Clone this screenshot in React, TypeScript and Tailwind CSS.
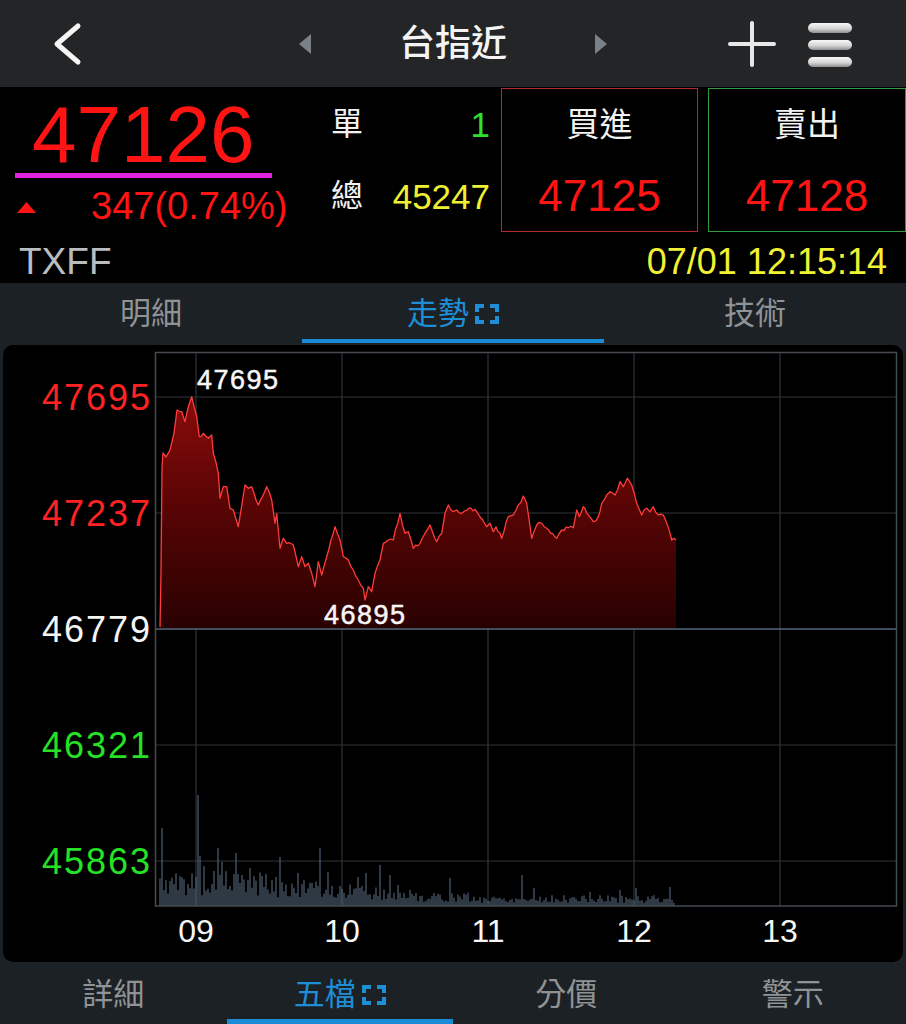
import React from "react";

const PRICE_PTS: [number, number][] = [
  [160, 627], [161, 573], [162, 467], [163, 453], [166, 457], [170, 450], [174, 433],
  [177, 410], [181.7, 411.7], [185, 421.7], [188.3, 406.7], [191.7, 396.7], [196.7, 416.7],
  [199.3, 436.7], [203.3, 433.3], [208.3, 438.3], [211.7, 435], [213.3, 453.3], [218.3, 473.3],
  [220, 498.3], [223.3, 486.7], [226.7, 486.7], [230, 508.3], [233.3, 510], [238.3, 526.7],
  [245, 485], [248.3, 488.3], [251.7, 486.7], [258.3, 505], [266.7, 486.7], [271.7, 500],
  [275, 523.3], [276.7, 513.3], [280, 548.3], [283.3, 538.3], [286.7, 543.3], [293.3, 545],
  [298.3, 566.7], [301.7, 556.7], [305, 566.7], [308.3, 563.3], [311.7, 573.3], [315, 586.7],
  [318.3, 561.7], [321.7, 575], [326.7, 556.7], [335, 526.7], [340, 540], [343.3, 556.7],
  [348.3, 560], [353.3, 570], [358.3, 580], [363.3, 588.3], [365, 600], [368.3, 586.7],
  [371.7, 591.7], [375, 573.3], [380, 560], [383.3, 543.3], [388.3, 540], [393.3, 540],
  [400, 513.3], [405, 533.3], [408.3, 531.7], [413.3, 548.3], [420, 543.3], [425, 533.3],
  [430, 525], [436.7, 541.7], [441.7, 533.3], [445, 513.3], [448.3, 505], [453.3, 511.7],
  [456.7, 510], [461.7, 513.3], [465, 510.7], [475, 509.3], [476.7, 511.7], [486.7, 526.7],
  [490, 523.3], [493.3, 531.7], [496, 526.7], [501.7, 538.3], [508.3, 516.7], [513.3, 515],
  [518.3, 505], [523.3, 496], [526.7, 503.3], [531.7, 538.3], [536.7, 525], [541.7, 523.3],
  [546.7, 528.3], [556.7, 538.3], [561.7, 530], [568.3, 527.7], [573.3, 527.7], [576.7, 510],
  [579.3, 516.7], [583.3, 506.7], [586.7, 513.3], [593.3, 521.7], [598.3, 516.7],
  [601.7, 503.3], [606.7, 495], [610, 491.7], [615, 495], [620, 481.7], [623.3, 486.7],
  [627.3, 478.3], [631.7, 485], [636.7, 503.3], [641.7, 515], [646.7, 508.3], [650, 511.7],
  [653.3, 506.7], [658.3, 515], [663.3, 515], [666.7, 523.3], [671.7, 540], [676, 540],
];

function makeRng(seed: number) {
  let a = seed >>> 0;
  return () => {
    a = (a + 0x6d2b79f5) >>> 0;
    let t = a;
    t = Math.imul(t ^ (t >>> 15), t | 1);
    t ^= t + Math.imul(t ^ (t >>> 7), t | 61);
    return ((t ^ (t >>> 14)) >>> 0) / 4294967296;
  };
}

function buildTrace(): [number, number][] {
  const r = makeRng(11);
  const out: [number, number][] = [];
  for (let i = 0; i < PRICE_PTS.length - 1; i++) {
    const [x0, y0] = PRICE_PTS[i];
    const [x1, y1] = PRICE_PTS[i + 1];
    out.push([x0, y0]);
    const n = Math.floor((x1 - x0) / 1.7);
    for (let k = 1; k < n; k++) {
      const t = k / n;
      out.push([x0 + (x1 - x0) * t, y0 + (y1 - y0) * t + (r() - 0.5) * 4]);
    }
  }
  out.push(PRICE_PTS[PRICE_PTS.length - 1]);
  return out;
}

const SPIKES: [number, number][] = [
  [162, 78], [198, 111], [200, 50], [204, 40], [218, 58], [222, 44], [236, 53], [242, 31],
  [250, 38], [262, 30], [279, 49], [297, 33], [319, 58], [328, 34], [357, 29], [366, 33],
  [380, 41], [390, 31], [397, 21], [449, 28], [522, 31], [533, 18], [590, 14], [620, 16],
  [636, 18], [670, 19],
];

function buildVolume(): [number, number][] {
  const r = makeRng(5);
  const spike = new Map<number, number>();
  SPIKES.forEach(([x, h]) => spike.set(Math.round(x / 2) * 2, h));
  const bars: [number, number][] = [];
  for (let x = 160; x <= 674; x += 2) {
    let base: number;
    if (x < 270) base = 26;
    else if (x < 420) base = 22 - (x - 270) * 0.07;
    else if (x < 470) base = 10;
    else base = 8;
    let h = base * (0.4 + r() * 0.95);
    const s = spike.get(x);
    if (s) h = s;
    bars.push([x, Math.max(2, h)]);
  }
  return bars;
}

const TRACE = buildTrace();
const VOLUME = buildVolume();

function ExpandIcon() {
  return (
    <svg width="24" height="20" viewBox="0 0 24 20" fill="none">
      <path
        d="M2 8V2h7M15 2h7v6M22 12v6h-7M9 18H2v-6"
        stroke="#1e8ed6"
        strokeWidth="4"
      />
    </svg>
  );
}

function Header() {
  return (
    <div className="grid h-[87px] grid-cols-[1fr_auto_1fr] items-center bg-[#232527]">
      <div className="flex items-center pl-[50px]">
        <svg width="34" height="44" viewBox="0 0 34 44" fill="none">
          <path d="M28 4 L7 22 L28 40" stroke="#f4f4f4" strokeWidth="5" strokeLinecap="round" strokeLinejoin="round" />
        </svg>
      </div>
      <div className="flex items-center">
        <svg width="12" height="20" viewBox="0 0 12 20">
          <path d="M12 0 L0 10 L12 20Z" fill="#7a8287" />
        </svg>
        <div className="mx-[88px] text-[36px] font-medium leading-none text-[#f4f4f4]">台指近</div>
        <svg width="12" height="20" viewBox="0 0 12 20">
          <path d="M0 0 L12 10 L0 20Z" fill="#7a8287" />
        </svg>
      </div>
      <div className="flex items-center justify-end gap-[32px] pr-[54px]">
        <svg width="48" height="48" viewBox="0 0 48 48" fill="none">
          <path d="M2 24H46M24 3V45" stroke="#e8e8e8" strokeWidth="4" strokeLinecap="round" />
        </svg>
        <svg width="44" height="46" viewBox="0 0 44 46">
          <defs>
            <linearGradient id="barShade" x1="0" y1="0" x2="0" y2="1">
              <stop offset="0" stopColor="#f8f8f8" />
              <stop offset="0.55" stopColor="#d6d6d6" />
              <stop offset="1" stopColor="#8e8e8e" />
            </linearGradient>
          </defs>
          <rect x="0" y="2" width="44" height="10" rx="5" fill="url(#barShade)" />
          <rect x="0" y="19" width="44" height="10" rx="5" fill="url(#barShade)" />
          <rect x="0" y="36" width="44" height="10" rx="5" fill="url(#barShade)" />
        </svg>
      </div>
    </div>
  );
}

function Quote() {
  return (
    <div className="flex h-[196px] flex-col bg-black pt-[1px]">
      <div className="flex h-[144px]">
        {/* last price + change */}
        <div className="flex w-[320px] flex-col">
          <div className="mt-[11px] pl-[32px] text-[80px] leading-[72px] text-[#ff1414]">47126</div>
          <div className="ml-[15px] mt-[2px] h-[5px] w-[257px] bg-[#e024e0]" />
          <div className="mt-[10px] flex h-[36px] items-center">
            <svg className="ml-[17px] mt-[2px]" width="19" height="11" viewBox="0 0 19 11">
              <path d="M9.5 0 L19 11 L0 11Z" fill="#ff1414" />
            </svg>
            <div className="ml-[55px] text-[38px] leading-[36px] text-[#ff1414]">347(0.74%)</div>
          </div>
        </div>
        {/* single / total volume */}
        <div className="flex w-[181px] flex-col pl-[11px] pr-[11px]">
          <div className="flex h-[72px] items-center justify-between">
            <span className="text-[32px] leading-none text-[#f2f2f2]">單</span>
            <span className="text-[35px] leading-none text-[#2fe02f]">1</span>
          </div>
          <div className="flex h-[72px] items-center justify-between">
            <span className="text-[32px] leading-none text-[#f2f2f2]">總</span>
            <span className="text-[35px] leading-none text-[#f0f032]">45247</span>
          </div>
        </div>
        {/* bid / ask */}
        <div className="flex w-[197px] flex-col border border-[#b32a2c]">
          <div className="flex h-[71px] items-center justify-center text-[33px] leading-none text-[#f2f2f2]">買進</div>
          <div className="flex h-[71px] items-center justify-center text-[44px] leading-none text-[#ff1414]">47125</div>
        </div>
        <div className="ml-[10px] flex flex-1 flex-col border border-[#2f9b3c]">
          <div className="flex h-[71px] items-center justify-center text-[33px] leading-none text-[#f2f2f2]">賣出</div>
          <div className="flex h-[71px] items-center justify-center text-[44px] leading-none text-[#ff1414]">47128</div>
        </div>
      </div>
      <div className="flex flex-1 items-center justify-between pl-[19px] pr-[19px] pt-[8px]">
        <span className="text-[37px] leading-none text-[#b9bdc0]">TXFF</span>
        <span className="text-[36px] leading-none text-[#f2f234]">07/01 12:15:14</span>
      </div>
    </div>
  );
}

function Tabs() {
  const tabs = [
    { label: "明細", active: false },
    { label: "走勢", active: true },
    { label: "技術", active: false },
  ];
  return (
    <div className="grid h-[62px] grid-cols-3 bg-[#1c2125]">
      {tabs.map((t) => (
        <div key={t.label} className="relative flex items-center justify-center pb-[2px]">
          <span className={`text-[31px] leading-none ${t.active ? "text-[#1e8ed6]" : "text-[#909396]"}`}>{t.label}</span>
          {t.active && (
            <span className="ml-[6px] mt-[2px]">
              <ExpandIcon />
            </span>
          )}
          {t.active && <div className="absolute bottom-[2px] left-0 right-0 h-[4px] bg-[#1a8cd6]" />}
        </div>
      ))}
    </div>
  );
}

function Chart() {
  const line = TRACE.map(([x, y]) => `${x.toFixed(1)},${y.toFixed(1)}`).join(" ");
  const area = `M160,628 L${line.replace(/ /g, " L")} L676,628 Z`;
  const hLines = [397, 513, 745, 861];
  const vLines = [196, 342, 488, 634, 780];
  const priceLabels: [string, number, string][] = [
    ["47695", 397, "#ff2222"],
    ["47237", 513, "#ff2222"],
    ["46779", 629, "#f4f4f4"],
    ["46321", 745, "#26e226"],
    ["45863", 861, "#26e226"],
  ];
  const timeLabels: [string, number][] = [
    ["09", 196],
    ["10", 342],
    ["11", 488],
    ["12", 634],
    ["13", 780],
  ];
  return (
    <div className="mx-[3px] h-[617px] overflow-hidden rounded-[10px] bg-black">
      <svg width="900" height="617" viewBox="3 345 900 617" style={{ fontFamily: "'Liberation Sans', Arial, sans-serif" }}>
        <defs>
          <linearGradient id="areaFill" gradientUnits="userSpaceOnUse" x1="0" y1="397" x2="0" y2="628">
            <stop offset="0" stopColor="#8a0b0b" />
            <stop offset="0.5" stopColor="#560404" />
            <stop offset="1" stopColor="#290101" />
          </linearGradient>
        </defs>
        {hLines.map((y) => (
          <line key={y} x1="155" x2="896" y1={y} y2={y} stroke="#30353a" strokeWidth="1.2" />
        ))}
        {vLines.map((x) => (
          <line key={x} x1={x} x2={x} y1="352" y2="906" stroke="#30353a" strokeWidth="1.2" />
        ))}
        <path d={area} fill="url(#areaFill)" />
        <polyline points={line} fill="none" stroke="#ff3b3b" strokeWidth="1.3" strokeLinejoin="round" />
        <line x1="155" x2="896" y1="629" y2="629" stroke="#56687a" strokeWidth="1.6" />
        {VOLUME.map(([x, h]) => (
          <line key={x} x1={x} x2={x} y1={906} y2={906 - h} stroke="#56697e" strokeWidth="1.1" />
        ))}
        <rect x="155.5" y="352.5" width="741" height="553.5" fill="none" stroke="#464b51" strokeWidth="1.5" />
        {priceLabels.map(([t, y, c]) => (
          <text key={t} x="152" y={y + 13} fill={c} fontSize="36" letterSpacing="2" textAnchor="end">
            {t}
          </text>
        ))}
        <text x="197" y="389" fill="#f6f6f6" fontSize="27" letterSpacing="1.5" stroke="#f6f6f6" strokeWidth="0.5">
          47695
        </text>
        <text x="324" y="624" fill="#f6f6f6" fontSize="27" letterSpacing="1.5" stroke="#f6f6f6" strokeWidth="0.5">
          46895
        </text>
        {timeLabels.map(([t, x]) => (
          <text key={t} x={x} y="942" fill="#f6f6f6" fontSize="32" textAnchor="middle">
            {t}
          </text>
        ))}
      </svg>
    </div>
  );
}

function BottomTabs() {
  const tabs = [
    { label: "詳細", active: false },
    { label: "五檔", active: true },
    { label: "分價", active: false },
    { label: "警示", active: false },
  ];
  return (
    <div className="grid h-[62px] grid-cols-4 bg-[#1c2125]">
      {tabs.map((t) => (
        <div key={t.label} className="relative flex items-center justify-center pt-[2px]">
          <span className={`text-[31px] leading-none ${t.active ? "text-[#1e8ed6]" : "text-[#909396]"}`}>{t.label}</span>
          {t.active && (
            <span className="ml-[6px] mt-[2px]">
              <ExpandIcon />
            </span>
          )}
          {t.active && <div className="absolute bottom-0 left-0 right-0 h-[5px] bg-[#1a8cd6]" />}
        </div>
      ))}
    </div>
  );
}

export default function App() {
  return (
    <div className="flex h-[1024px] w-[906px] flex-col overflow-hidden bg-[#1c2125] [font-family:'Liberation_Sans','Noto_Sans_CJK_TC',sans-serif]">
      <Header />
      <Quote />
      <Tabs />
      <Chart />
      <BottomTabs />
    </div>
  );
}
